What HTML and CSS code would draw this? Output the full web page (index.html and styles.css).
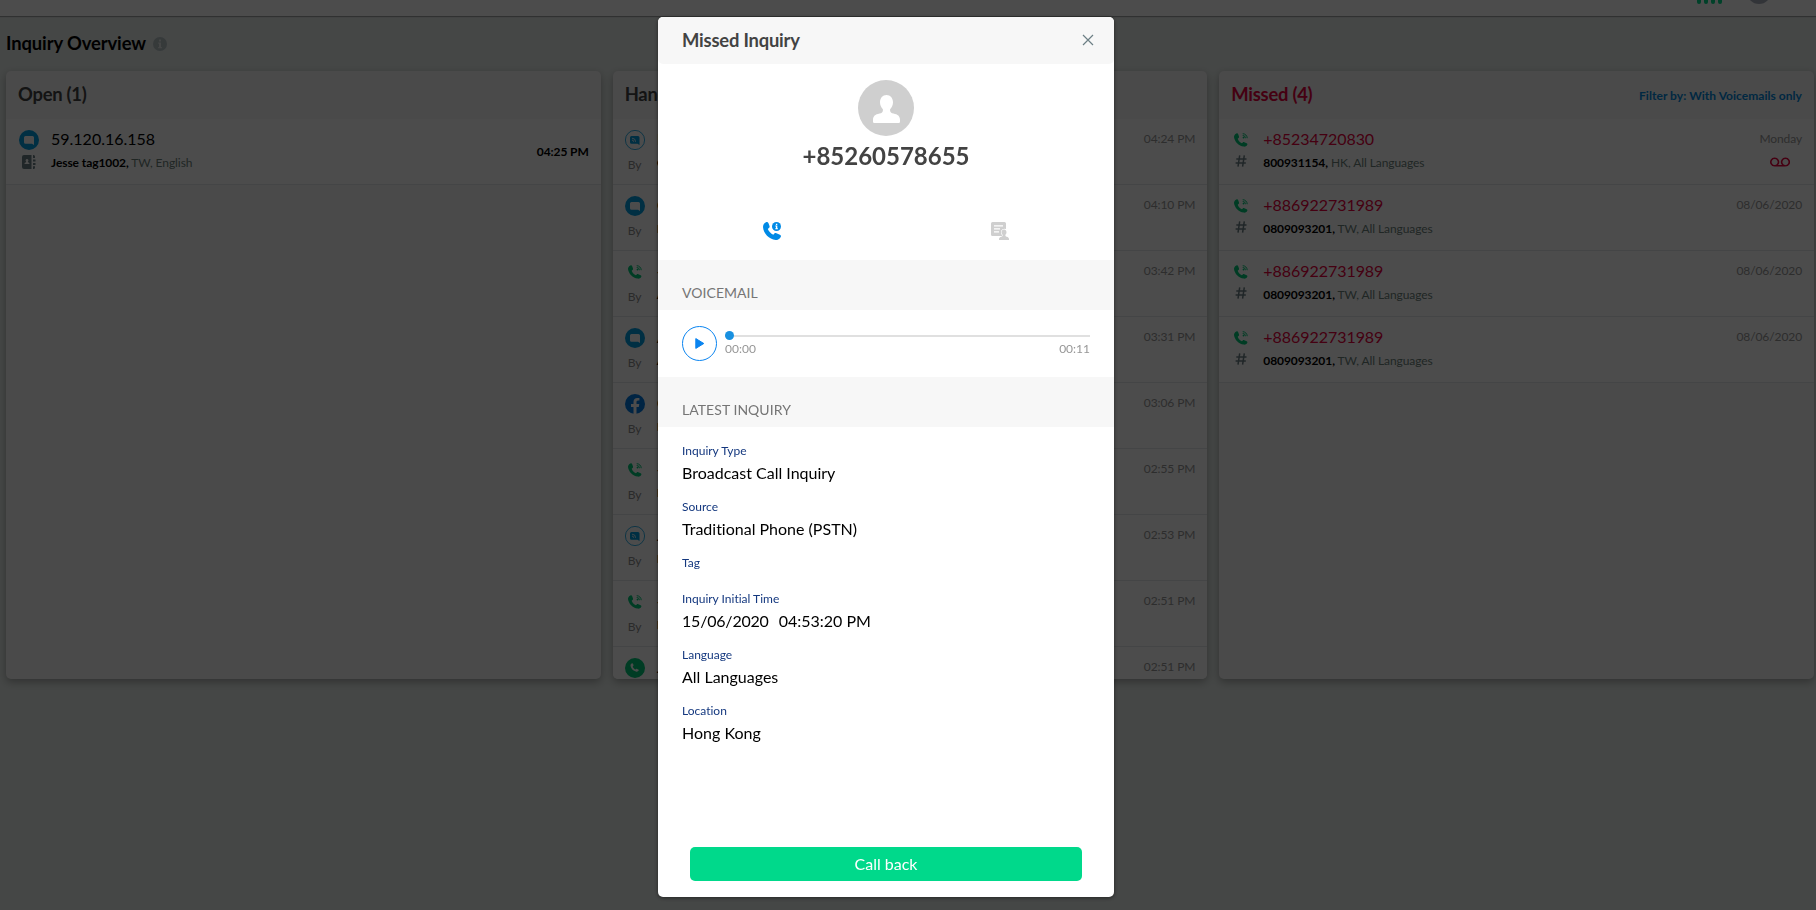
FILE: index.html
```
<!DOCTYPE html>
<html lang="en">
	<head>
		<meta charset="utf-8">
		<title>Inquiry Overview</title>
		<link rel="stylesheet" href="styles.css">
	</head>
	<body>
		<!-- Shared icons -->
		<svg class="sprite" width="0" height="0">
			<symbol id="phone" viewBox="0 0 14 14">
				<path d="M2.400.5c.8-.4 1.500-.1 1.800.7l.8 2.200c.2.7 0 1.200-.5 1.600l-.8.7c.7 2 2.300 3.700 4.200 4.600l.9-.9c.5-.4.9-.5 1.500-.2l2.300 1c.8.4 1 1 .6 1.700-.7 1.200-2 1.900-3.400 1.700C4.500 12.800.6 8.700 0 4 0 2.500.9 1.100 2.400.5z"/>
				<circle cx="9.500" cy="4.600" r=".9"/>
				<path d="M8.700 2.500a2.700 2.700 0 0 1 2.700 2.700M8.700.7a4.500 4.500 0 0 1 4.500 4.500" fill="none" stroke="currentColor" stroke-width="1"/>
			</symbol>
			<symbol id="chat" viewBox="0 0 20 20">
				<circle cx="10" cy="10" r="10"/>
				<path fill="#fff" d="M6.500 6h7A1.500 1.500 0 0 1 15 7.500V15l-2-1.200H6.500A1.500 1.500 0 0 1 5 12.300V7.500A1.500 1.500 0 0 1 6.500 6z"/>
			</symbol>
			<symbol id="webcall" viewBox="0 0 20 20">
				<circle cx="10" cy="10" r="9.600" fill="none" stroke="currentColor" stroke-width=".8"/>
				<path d="M6.500 6H13a1.500 1.500 0 0 1 1.500 1.500V15l-2-1.200h-6A1.500 1.500 0 0 1 5 12.300V7.500A1.500 1.500 0 0 1 6.500 6z"/>
				<path d="M7 8.200a3.600 3.600 0 0 1 3.600 3.600M7 10.100a1.700 1.700 0 0 1 1.700 1.700" fill="none" stroke="#fff" stroke-width=".8"/>
			</symbol>
			<symbol id="facebook" viewBox="0 0 20 20">
				<circle cx="10" cy="10" r="10"/>
				<path fill="#fff" d="M8.500 19.900v-7H6V10h2.500V7.800c0-2.500 1.500-3.900 3.800-3.900.7 0 1.500.1 2.100.2v2.500h-1.300c-1.200 0-1.600.8-1.600 1.600V10h2.800l-.5 2.900h-2.300v7z"/>
			</symbol>
			<symbol id="callcircle" viewBox="0 0 20 20">
				<circle cx="10" cy="10" r="10"/>
				<path fill="#fff" d="M6.900 5.300c.5-.2.9 0 1.100.5l.5 1.300c.1.500 0 .8-.3 1l-.5.5c.5 1.300 1.500 2.400 2.700 3l.6-.6c.3-.3.600-.3 1-.1l1.300.6c.5.300.700.700.4 1.100-.5.800-1.300 1.300-2.200 1.100-3.300-.6-5.700-3.200-6-6.100 0-1 .5-1.900 1.400-2.300z"/>
			</symbol>
			<symbol id="hash" viewBox="0 0 12 12">
				<path d="M4.700.3 3 11.700M9.300.3 7.600 11.700M1.300 3.900h10.200M.6 8.100h10.200" fill="none" stroke="currentColor" stroke-width="1.500"/>
			</symbol>
		</svg>

		<div class="topbar">
			<div class="signal"><i></i><i></i><i></i><i></i></div>
			<div class="user"></div>
		</div>

		<div class="page">
			<h1 class="title">Inquiry Overview
				<svg class="info" viewBox="0 0 14 14"><circle cx="7" cy="7" r="7"/><path fill="#e6eceb" d="M6 2.500h2v2H6zM5.200 5.500H8v4.400h.9v1.300H5.200V9.900H6V6.800h-.8z"/></svg>
			</h1>

			<div class="columns">
				<div class="card open">
					<div class="card-head">Open (1)</div>
					<div class="row">
						<div class="icons">
							<svg class="ic20 blue"><use href="#chat"/></svg>
							<svg class="contact" viewBox="0 0 14 14"><path d="M2 0h7.500v14H2a2 2 0 0 1-2-2V2a2 2 0 0 1 2-2zM11 0h.5A1.500 1.500 0 0 1 13 1.500V3h-2zM11 4.500h2.500v2H11zM11 8h2.500v2H11zM11 11.300h2v1.200a1.500 1.500 0 0 1-1.500 1.500H11z"/><path fill="#fff" d="M5 4a1.400 1.400 0 0 1 .9 2.500v.8c1 .2 1.600.7 1.600 1.700h-5c0-1 .6-1.500 1.600-1.700v-.8A1.400 1.400 0 0 1 5 4z"/></svg>
						</div>
						<div class="who">
							<p class="name">59.120.16.158</p>
							<p class="sub"><b>Jesse tag1002,</b> TW, English</p>
						</div>
						<div class="time now">04:25 PM</div>
					</div>
				</div>

				<div class="card handled">
					<div class="card-head">Handled</div>
					<div class="row">
						<div class="icons"><svg class="ic20 blue"><use href="#webcall"/></svg><span>By</span></div>
						<div class="who"><p class="name">Dora</p><p class="sub"><b>Cindy</b></p></div>
						<div class="time">04:24 PM</div>
					</div>
					<div class="row">
						<div class="icons"><svg class="ic20 blue"><use href="#chat"/></svg><span>By</span></div>
						<div class="who"><p class="name">Guest</p><p class="sub"><b>Ben</b></p></div>
						<div class="time">04:10 PM</div>
					</div>
					<div class="row">
						<div class="icons"><svg class="ic14 green"><use href="#phone"/></svg><span>By</span></div>
						<div class="who"><p class="name">+852</p><p class="sub"><b>Amy</b></p></div>
						<div class="time">03:42 PM</div>
					</div>
					<div class="row">
						<div class="icons"><svg class="ic20 blue"><use href="#chat"/></svg><span>By</span></div>
						<div class="who"><p class="name">Anna</p><p class="sub"><b>Amy</b></p></div>
						<div class="time">03:31 PM</div>
					</div>
					<div class="row">
						<div class="icons"><svg class="ic20 fb"><use href="#facebook"/></svg><span>By</span></div>
						<div class="who"><p class="name">Guest</p><p class="sub"><b>Ben</b></p></div>
						<div class="time">03:06 PM</div>
					</div>
					<div class="row">
						<div class="icons"><svg class="ic14 green"><use href="#phone"/></svg><span>By</span></div>
						<div class="who"><p class="name">+852</p><p class="sub"><b>Ben</b></p></div>
						<div class="time">02:55 PM</div>
					</div>
					<div class="row">
						<div class="icons"><svg class="ic20 blue"><use href="#webcall"/></svg><span>By</span></div>
						<div class="who"><p class="name">Jesse</p><p class="sub"><b>Ben</b></p></div>
						<div class="time">02:53 PM</div>
					</div>
					<div class="row">
						<div class="icons"><svg class="ic14 green"><use href="#phone"/></svg><span>By</span></div>
						<div class="who"><p class="name">+852</p><p class="sub"><b>Ben</b></p></div>
						<div class="time">02:51 PM</div>
					</div>
					<div class="row">
						<div class="icons"><svg class="ic20 green"><use href="#callcircle"/></svg></div>
						<div class="who"><p class="name">Jesse</p></div>
						<div class="time">02:51 PM</div>
					</div>
				</div>

				<div class="card missed">
					<div class="card-head">Missed (4) <a class="filter">Filter by: With Voicemails only</a></div>
					<div class="row">
						<div class="icons"><svg class="ic14 green"><use href="#phone"/></svg><svg class="hash"><use href="#hash"/></svg></div>
						<div class="who"><p class="name">+85234720830</p><p class="sub"><b>800931154,</b> HK, All Languages</p></div>
						<div class="time">Monday
							<svg class="vm" viewBox="0 0 20 10"><path d="M4.600 8.800h10.800M4.600 8.800a3.800 3.800 0 1 1 .1 0M15.400 8.800a3.800 3.800 0 1 1 .1 0" fill="none" stroke="currentColor" stroke-width="1.600"/></svg>
						</div>
					</div>
					<div class="row">
						<div class="icons"><svg class="ic14 green"><use href="#phone"/></svg><svg class="hash"><use href="#hash"/></svg></div>
						<div class="who"><p class="name">+886922731989</p><p class="sub"><b>0809093201,</b> TW, All Languages</p></div>
						<div class="time">08/06/2020</div>
					</div>
					<div class="row">
						<div class="icons"><svg class="ic14 green"><use href="#phone"/></svg><svg class="hash"><use href="#hash"/></svg></div>
						<div class="who"><p class="name">+886922731989</p><p class="sub"><b>0809093201,</b> TW, All Languages</p></div>
						<div class="time">08/06/2020</div>
					</div>
					<div class="row">
						<div class="icons"><svg class="ic14 green"><use href="#phone"/></svg><svg class="hash"><use href="#hash"/></svg></div>
						<div class="who"><p class="name">+886922731989</p><p class="sub"><b>0809093201,</b> TW, All Languages</p></div>
						<div class="time">08/06/2020</div>
					</div>
				</div>
			</div>
		</div>

		<div class="overlay">
			<div class="modal">
				<div class="modal-head"><span>Missed Inquiry</span>
					<svg class="close" viewBox="0 0 12 12"><path d="M1 1l10 10M11 1L1 11" fill="none" stroke="#6c7f85" stroke-width="1.200"/></svg>
				</div>
				<div class="profile">
					<svg class="avatar" viewBox="0 0 56 56"><circle cx="28" cy="28" r="28" fill="#cfcfcf"/><path fill="#fff" d="M28.500 15c3.900 0 6.500 3.200 6.500 7.300 0 2.700-1.100 5.300-2.900 6.900v1.300c0 1.600 1.200 2.600 3.400 3.100 4.300.9 6.500 2.600 6.500 6.400v1.500c0 1-.7 1.500-1.600 1.500H16.600c-.9 0-1.600-.5-1.600-1.500V40c0-3.800 2.200-5.500 6.500-6.400 2.200-.5 3.400-1.500 3.400-3.100v-1.300c-1.800-1.600-2.900-4.200-2.900-6.900 0-4.100 2.600-7.300 6.500-7.300z"/></svg>
					<p class="number">+85260578655</p>
				</div>
				<div class="tabs">
					<div class="tab"><svg viewBox="0 0 18 18"><path fill="#008ae6" d="M3 .3C4.200-.2 5 .3 5.500 1.300l1 2.700c.3.900 0 1.500-.6 2l-1.100 1c1 2.500 3 4.600 5.500 5.700l1.100-1.200c.6-.6 1.200-.6 2-.3l3.500 1.600c1 .5 1.300 1.300.8 2.200-1 2-3 3.200-5 3C6 17.300.5 11.700 0 5 0 2.900 1.200 1 3 .3z"/><circle cx="13.500" cy="4.500" r="4.500" fill="#008ae6"/><path fill="#fff" d="M12.900 1.700h1.400v1.200h-1.400zM12.300 3.600h2v2.700h.6v.9h-2.600v-.9h.6V4.500h-.6z"/></svg></div>
					<div class="tab"><svg viewBox="0 0 18 18"><path fill="#cfcfcf" d="M1.500 0h12A1.500 1.500 0 0 1 15 1.500V7a3.500 3.500 0 0 0-5 3c0 1.500.5 2.500 1 3v1H1.500A1.500 1.500 0 0 1 0 12.500v-11A1.500 1.500 0 0 1 1.500 0z"/><path d="M3 3.800h9M3 6.800h6M3 9.800h5" stroke="#fff" stroke-width="1.300"/><path fill="#cfcfcf" stroke="#fff" stroke-width=".8" paint-order="stroke" d="M13 7.500c1.500 0 2.500 1.200 2.500 2.700 0 1.100-.4 2-1.100 2.600v1c0 .5.400.8 1.200 1 1.700.4 2.400 1.100 2.400 2.500v.7H8v-.7c0-1.400.7-2.100 2.400-2.500.8-.2 1.200-.5 1.200-1v-1c-.7-.6-1.100-1.500-1.100-2.600 0-1.500 1-2.700 2.500-2.700z"/></svg></div>
				</div>
				<div class="section">VOICEMAIL</div>
				<div class="player">
					<svg class="play" viewBox="0 0 35 35"><circle cx="17.500" cy="17.500" r="17" fill="none" stroke="#0a84f0"/><path fill="#0a84f0" stroke="#0a84f0" stroke-linejoin="round" d="M13.800 12.600v9.800l8-4.900z"/></svg>
					<div class="track">
						<div class="bar"><div class="knob"></div></div>
						<div class="times"><span>00:00</span><span>00:11</span></div>
					</div>
				</div>
				<div class="section">LATEST INQUIRY</div>
				<dl class="fields">
					<dt>Inquiry Type</dt><dd>Broadcast Call Inquiry</dd>
					<dt>Source</dt><dd>Traditional Phone (PSTN)</dd>
					<dt>Tag</dt><dd class="empty"></dd>
					<dt>Inquiry Initial Time</dt><dd><span class="date">15/06/2020</span>04:53:20 PM</dd>
					<dt>Language</dt><dd>All Languages</dd>
					<dt>Location</dt><dd>Hong Kong</dd>
				</dl>
				<button class="callback">Call back</button>
			</div>
		</div>
	</body>
</html>
```
FILE: styles.css
```
* {
	box-sizing: border-box;
}
body {
	margin: 0;
	height: 910px;
	overflow: hidden;
	background: #e8eeeb;
	color: #000;
	font-family: Lato, sans-serif;
	font-size: 12px;
	font-variant-ligatures: none;
}
p, h1, dl, dd {
	margin: 0;
}
svg {
	display: block;
	fill: currentColor;
}
.sprite {
	position: absolute;
}
.topbar {
	display: flex;
	justify-content: flex-end;
	height: 16px;
	padding-right: 45px;
	background: #fff;
	box-shadow: 0 1px 1px rgba(0, 0, 0, .3);
}
.signal {
	display: flex;
	gap: 3px;
	margin-right: 25px;
}
.signal i {
	width: 4px;
	height: 4px;
	border-radius: 0 0 2px 2px;
	background: #00d98b;
}
.user {
	width: 24px;
	height: 24px;
	margin-top: -20px;
	border-radius: 50%;
	background: #a9b0bd;
}
.page {
	padding: 14px 2px 0 6px;
}
.title {
	display: flex;
	align-items: center;
	height: 26px;
	font-size: 18.400px;
	font-weight: 700;
	letter-spacing: -.1px;
}
.info {
	width: 14px;
	height: 14px;
	margin: 2px 0 0 7px;
	color: #b4c1c4;
}
.columns {
	display: grid;
	grid-template-columns: repeat(3, 1fr);
	gap: 12px;
	height: 608px;
	margin-top: 15px;
}
.card {
	overflow: hidden;
	border-radius: 5px;
	background: #f7f7f7;
	box-shadow: 0 3px 8px rgba(0, 0, 0, .3);
}
.card-head {
	display: flex;
	align-items: center;
	justify-content: space-between;
	height: 48px;
	padding: 0 12px 2px;
	color: #434343;
	font-size: 18.400px;
	font-weight: 700;
	letter-spacing: -.25px;
}
.row {
	display: flex;
	height: 66px;
	padding: 0 12px 0 11px;
	border-bottom: 1px solid #e4e8e9;
	background: #fff;
}
.open .row {
	padding-left: 12px;
}
.icons {
	display: flex;
	flex-direction: column;
	align-items: center;
	width: 22px;
	color: #6c7f85;
}
.icons span {
	margin-top: 7px;
	color: #8c8c8c;
	line-height: 16px;
}
.ic20 {
	width: 20px;
	height: 20px;
	margin-top: 11px;
}
.ic14 {
	width: 14px;
	height: 14px;
	margin: 14px 0 3px;
}
.blue {
	color: #009de0;
}
.green {
	color: #00c878;
}
.fb {
	color: #0078e0;
}
.contact {
	width: 14px;
	height: 14px;
	margin-top: 5px;
}
.hash {
	width: 12px;
	height: 12px;
	margin-top: 5px;
}
.who {
	flex: 1;
	padding: 9px 0 0 11px;
}
.name {
	font-size: 16px;
	line-height: 22px;
}
.sub {
	margin-top: 5px;
	color: #6c7f7b;
	letter-spacing: -.08px;
	line-height: 16px;
}
.sub b {
	color: #000;
}
.time {
	padding-top: 12px;
	color: #979797;
	letter-spacing: -.1px;
	line-height: 16px;
	text-align: right;
}
.now {
	padding-top: 25px;
	color: #000;
	font-weight: 700;
}
.missed .card-head,
.missed .name {
	color: #e6003c;
}
.missed .name {
	letter-spacing: -.05px;
}
.missed .filter {
	color: #0087dc;
	font-size: 12px;
	font-weight: 700;
	letter-spacing: .04px;
	padding-top: 2px;
}
.vm {
	width: 20px;
	height: 10px;
	margin: 10px 12px 0 auto;
	color: #e6003c;
}

/* Dialog */
.overlay {
	position: fixed;
	inset: 0;
	display: flex;
	justify-content: center;
	align-items: flex-start;
	padding-top: 17px;
	background: rgba(0, 0, 0, .7);
}
.modal {
	display: flex;
	flex-direction: column;
	width: 456px;
	height: 880px;
	margin-right: 44px;
	border-radius: 5px;
	background: #fff;
	box-shadow: 0 1px 4px rgba(0, 0, 0, .5);
}
.modal-head {
	display: flex;
	align-items: center;
	justify-content: space-between;
	height: 47px;
	padding: 0 20px 1px 24px;
	border-radius: 5px;
	background: #f7f7f7;
	color: #434343;
	font-size: 18.400px;
	font-weight: 700;
	letter-spacing: -.2px;
}
.close {
	width: 12px;
	height: 12px;
}
.profile {
	display: flex;
	flex-direction: column;
	align-items: center;
	height: 134px;
	padding-top: 16px;
}
.avatar {
	width: 56px;
	height: 56px;
}
.number {
	margin-top: 5px;
	color: #434343;
	font-size: 24px;
	font-weight: 700;
	line-height: 30px;
}
.tabs {
	display: flex;
	height: 62px;
	padding-top: 24px;
}
.tab {
	flex: 1;
}
.tab svg {
	width: 18px;
	height: 18px;
	margin: 0 auto;
}
.section {
	height: 50px;
	padding: 24px 24px 0;
	background: #f7f7f7;
	color: #757575;
	font-size: 14px;
	letter-spacing: .05px;
	line-height: 18px;
}
.player {
	display: flex;
	gap: 8px;
	height: 67px;
	padding: 16px 24px 0;
}
.play {
	width: 35px;
	height: 35px;
}
.track {
	flex: 1;
	padding-top: 9px;
}
.bar {
	height: 2px;
	background: #e0e0e0;
}
.knob {
	position: absolute;
	width: 9px;
	height: 9px;
	margin-top: -4px;
	border-radius: 50%;
	background: #1890e0;
}
.times {
	display: flex;
	justify-content: space-between;
	margin-top: 4px;
	color: #979797;
	line-height: 16px;
}
.fields {
	padding: 16px 24px 0;
}
.fields dt {
	color: #14387f;
	line-height: 16px;
}
.fields dd {
	height: 40px;
	padding-top: 3px;
	font-size: 16px;
	line-height: 22px;
}
.fields .empty {
	height: 20px;
}
.date {
	margin-right: 10px;
	letter-spacing: -.2px;
}
.callback {
	height: 34px;
	margin: auto 32px 16px;
	padding: 0 0 2px;
	border: 0;
	border-radius: 5px;
	background: #00d98b;
	color: #fff;
	font: 16px Lato, sans-serif;
}
```
